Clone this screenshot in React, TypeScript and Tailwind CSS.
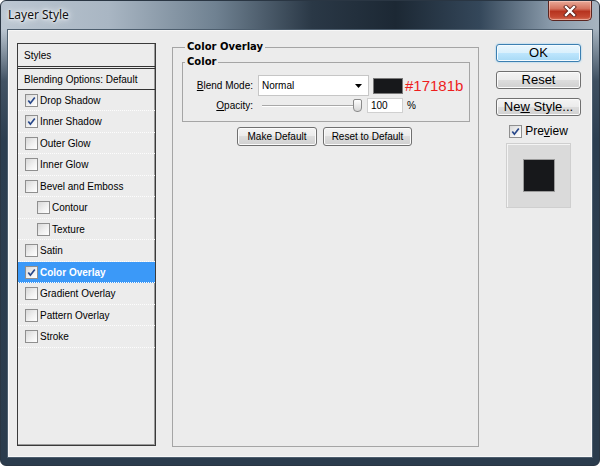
import React from "react";

const Check = ({ checked }: { checked?: boolean }) => (
  <span className="w-[13px] h-[13px] shrink-0 border border-[#8f8f8f] bg-[linear-gradient(135deg,#d8d8d8_0%,#f2f2f2_60%,#ffffff_100%)] flex items-center justify-center">
    {checked && (
      <svg width="9" height="9" viewBox="0 0 9 9">
        <path d="M1.3 4.4 L3.4 7.2 L7.8 1.4" fill="none" stroke="#27478a" strokeWidth="1.7" />
      </svg>
    )}
  </span>
);

type Row = { label: string; checked?: boolean; indent?: boolean; selected?: boolean };

const rows: Row[] = [
  { label: "Drop Shadow", checked: true },
  { label: "Inner Shadow", checked: true },
  { label: "Outer Glow" },
  { label: "Inner Glow" },
  { label: "Bevel and Emboss" },
  { label: "Contour", indent: true },
  { label: "Texture", indent: true },
  { label: "Satin" },
  { label: "Color Overlay", checked: true, selected: true },
  { label: "Gradient Overlay" },
  { label: "Pattern Overlay" },
  { label: "Stroke" },
];

const btn =
  "rounded-[3px] border border-[#707070] bg-[linear-gradient(180deg,#f4f4f4_0%,#ebebeb_50%,#dddddd_50%,#d0d0d0_100%)] shadow-[inset_0_0_0_1px_#fbfbfb] flex items-center justify-center text-black";

export default function App() {
  return (
    <div className="w-[600px] h-[466px] bg-white">
      <div className="w-[600px] h-[466px] rounded-[6px] border border-[#2a3643] flex flex-col px-[6px] pb-[7px] bg-[linear-gradient(180deg,rgba(44,62,80,0)_0px,rgba(44,62,80,0)_28px,rgba(44,62,80,0.85)_80px,#2c3e50_140px,#2b3c4d_100%),linear-gradient(90deg,#bcc7d2_0%,#a9b6c3_18%,#6f8191_36%,#2a3846_52%,#1c2834_66%,#34475a_80%,#8a9bab_92%,#a7b4c0_100%)] font-['Liberation_Sans',Arial,sans-serif] text-[10px] text-black">
        {/* title bar */}
        <div className="h-[28px] flex items-start justify-between">
          <div className="pt-[6px] pl-[1px] font-['Noto_Sans',sans-serif] text-[12px] leading-[16px] text-[#111] [text-shadow:0_0_6px_#fff,0_0_3px_#fff,0_0_10px_#e8eef4]">
            Layer Style
          </div>
          <div className="mt-[0px] mr-[1px] w-[44px] h-[20px] rounded-b-[5px] border border-t-0 border-[#5b2520] bg-[linear-gradient(180deg,#e9a998_0%,#d4735f_40%,#b7341f_55%,#c54a33_85%,#d8785f_100%)] shadow-[inset_0_0_0_1px_rgba(255,220,210,0.5)] flex items-center justify-center">
            <svg width="14" height="12" viewBox="0 0 14 12">
              <path d="M3 2 L11 10 M11 2 L3 10" stroke="#5a1e18" strokeWidth="4" strokeLinecap="square" />
              <path d="M3 2 L11 10 M11 2 L3 10" stroke="#ffffff" strokeWidth="2.4" strokeLinecap="square" />
            </svg>
          </div>
        </div>
        {/* content */}
        <div className="flex-1 bg-[#ececec] border border-[#4d5e6e] shadow-[inset_0_0_0_1px_#f7f7f7] flex items-start">
          {/* styles panel */}
          <div className="ml-[9px] mt-[13px] w-[139px] h-[403px] border border-[#3a3a3a] shadow-[inset_-1px_-1px_0_#9a9a9a] flex flex-col">
            <div className="h-[23px] border-b border-[#333] pl-[6px] flex items-center">Styles</div>
            <div className="h-[22px] mt-[1px] border-t border-b border-[#333] pl-[6px] flex items-center">
              Blending Options: Default
            </div>
            {rows.map((r, i) => (
              <div
                key={r.label}
                className={`${i % 2 === 0 ? "h-[21px]" : "h-[22px]"} ${r.indent ? "pl-[19px]" : "pl-[7px]"} ${
                  r.selected ? "bg-[#3b99f8] text-white font-bold" : ""
                } flex items-center gap-[2px] border-b border-dotted border-[#fdfdfd]`}
              >
                <Check checked={r.checked} />
                <span>{r.label}</span>
              </div>
            ))}
          </div>

          {/* middle */}
          <fieldset className="ml-[16px] mt-[11px] w-[307px] h-[406px] border border-[#a5a5a5] pl-[9px] pr-[8px] pt-[3px] min-w-0">
            <legend className="ml-[3px] px-[2px] leading-[12px] font-['DejaVu_Sans',sans-serif] font-bold text-[10px]">
              Color Overlay
            </legend>
            <fieldset className="w-[288px] border border-[#a5a5a5] pb-[8px] min-w-0">
              <legend className="ml-[2px] px-[2px] leading-[12px] font-['DejaVu_Sans',sans-serif] font-bold text-[10px]">
                Color
              </legend>
              <div className="mt-[7px] flex items-center h-[21px]">
                <span className="w-[70px] text-right">
                  <span className="underline">B</span>lend Mode:
                </span>
                <div className="ml-[5px] w-[111px] h-[21px] bg-white border border-[#c6c6c6] flex items-center justify-between pl-[3px] pr-[6px]">
                  <span>Normal</span>
                  <svg width="7" height="4" viewBox="0 0 7 4">
                    <path d="M0 0 H7 L3.5 4 Z" fill="#000" />
                  </svg>
                </div>
                <div className="ml-[4px] w-[30px] h-[16px] border border-[#7a7a7a] bg-[#17181b]" />
                <span className="ml-[2px] text-[15px] leading-[16px] text-[#ee1d1d]">#17181b</span>
              </div>
              <div className="mt-[2px] flex items-center h-[15px]">
                <span className="w-[70px] text-right">
                  <span className="underline">O</span>pacity:
                </span>
                <div className="ml-[9px] w-[100px] h-[15px] relative flex items-center">
                  <div className="w-full h-[2px] border-t border-[#a8a8a8] border-b border-b-white" />
                  <div className="absolute left-[91px] top-[1px] w-[9px] h-[13px] rounded-[2px] rounded-b-[4px] border border-[#8a8a8a] bg-[linear-gradient(180deg,#ffffff_0%,#e6e6e6_60%,#d6d6d6_100%)]" />
                </div>
                <div className="ml-[5px] w-[36px] h-[15px] bg-white border border-[#d0d0d0] flex items-center pl-[3px]">
                  100
                </div>
                <span className="ml-[4px]">%</span>
              </div>
            </fieldset>
            <div className="mt-[5px] ml-[55px] flex gap-[6px]">
              <div className={`${btn} w-[80px] h-[19px]`}>Make Default</div>
              <div className={`${btn} w-[89px] h-[19px]`}>Reset to Default</div>
            </div>
          </fieldset>

          {/* right column */}
          <div className="ml-[17px] mt-[14px] w-[85px] flex flex-col items-center text-[13px]">
            <div className="w-[85px] h-[18px] rounded-[3px] border border-[#3c7fb1] bg-[linear-gradient(180deg,#eaf6fd_0%,#d9f0fc_50%,#bee6fd_50%,#a7d9f5_100%)] shadow-[inset_0_0_0_1px_#f4fbff,0_0_2px_#7ec4ef] flex items-center justify-center">
              OK
            </div>
            <div className={`${btn} mt-[9px] w-[85px] h-[18px]`}>Reset</div>
            <div className={`${btn} mt-[9px] w-[85px] h-[18px]`}>
              Ne<span className="underline">w</span>&nbsp;Style...
            </div>
            <div className="mt-[8px] h-[14px] flex items-center gap-[3px] text-[12px]">
              <Check checked />
              <span>
                Pre<span className="underline">v</span>iew
              </span>
            </div>
            <div className="mt-[5px] w-[65px] h-[65px] bg-[#dadada] border border-[#cfcfcf] shadow-[inset_1px_1px_0_#f4f4f4] flex items-center justify-center">
              <div className="w-[32px] h-[33px] bg-[#17181b] border border-[#9a9a9a]" />
            </div>
          </div>
        </div>
      </div>
    </div>
  );
}
